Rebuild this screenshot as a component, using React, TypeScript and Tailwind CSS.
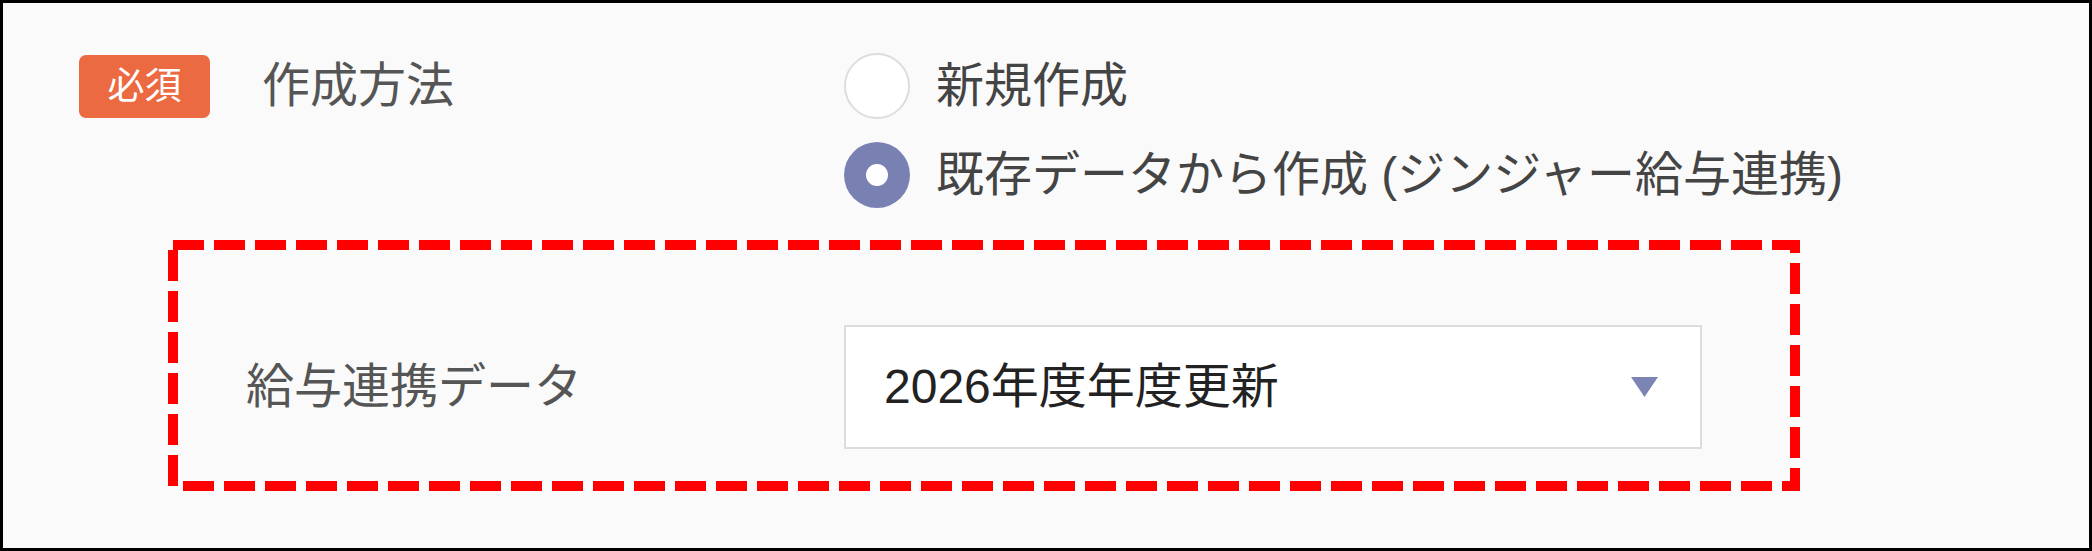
import { useState } from "react";

const FONT = { fontFamily: '"Liberation Sans", "Noto Sans CJK JP", sans-serif' };

const options = [
  { id: "new", label: "新規作成" },
  { id: "existing", label: "既存データから作成 (ジンジャー給与連携)" },
];

function Radio({ checked }: { checked: boolean }) {
  if (checked) {
    return (
      <span className="flex h-[66px] w-[66px] shrink-0 items-center justify-center rounded-full bg-[#7981b3]">
        <span className="h-[22px] w-[22px] rounded-full bg-white" />
      </span>
    );
  }
  return <span className="h-[66px] w-[66px] shrink-0 rounded-full border-2 border-[#dddddd] bg-white" />;
}

// Red dashed annotation frame drawn over the linked-data row
function DashedFrame() {
  return (
    <svg className="pointer-events-none absolute inset-0" width="1632" height="251">
      <rect
        x="5"
        y="5"
        width="1622"
        height="241"
        fill="none"
        stroke="#ff0000"
        strokeWidth="10"
        strokeDasharray="31 10"
      />
    </svg>
  );
}

export default function App() {
  const [method, setMethod] = useState("existing");

  return (
    <div
      className="box-border flex h-[551px] w-[2092px] flex-col border-[3px] border-black bg-[#fafafa] pt-[50px]"
      style={FONT}
    >
      {/* 作成方法 */}
      <div className="flex pl-[76px]">
        <div className="flex h-[66px] w-[765px] items-center gap-[52px]">
          <span className="flex h-[63px] w-[131px] items-center justify-center rounded-[7px] bg-[#ec6a42] text-[37px] leading-none text-white">
            必須
          </span>
          <span className="text-[48px] leading-none text-[#555555]">作成方法</span>
        </div>
        <div className="flex flex-col gap-[23px]">
          {options.map((o) => (
            <label
              key={o.id}
              className="flex h-[66px] cursor-pointer items-center gap-[26px]"
              onClick={() => setMethod(o.id)}
            >
              <Radio checked={method === o.id} />
              <span className="text-[48px] leading-none text-[#444444]">{o.label}</span>
            </label>
          ))}
        </div>
      </div>

      {/* 給与連携データ */}
      <div className="relative ml-[165px] mt-[32px] w-[1632px] pb-[42px] pt-[85px]">
        <DashedFrame />
        <div className="flex items-center pl-[78px]">
          <span className="w-[598px] text-[48px] leading-none text-[#555555]">給与連携データ</span>
          <div className="box-border flex h-[124px] w-[858px] items-center justify-between border-2 border-[#dcdcdc] bg-white pl-[38px] pr-[42px]">
            <span className="text-[48px] leading-none text-[#222222]">2026年度年度更新</span>
            <svg width="27" height="20" viewBox="0 0 27 20">
              <polygon points="0,0 27,0 13.5,20" fill="#7c84b4" />
            </svg>
          </div>
        </div>
      </div>
    </div>
  );
}
